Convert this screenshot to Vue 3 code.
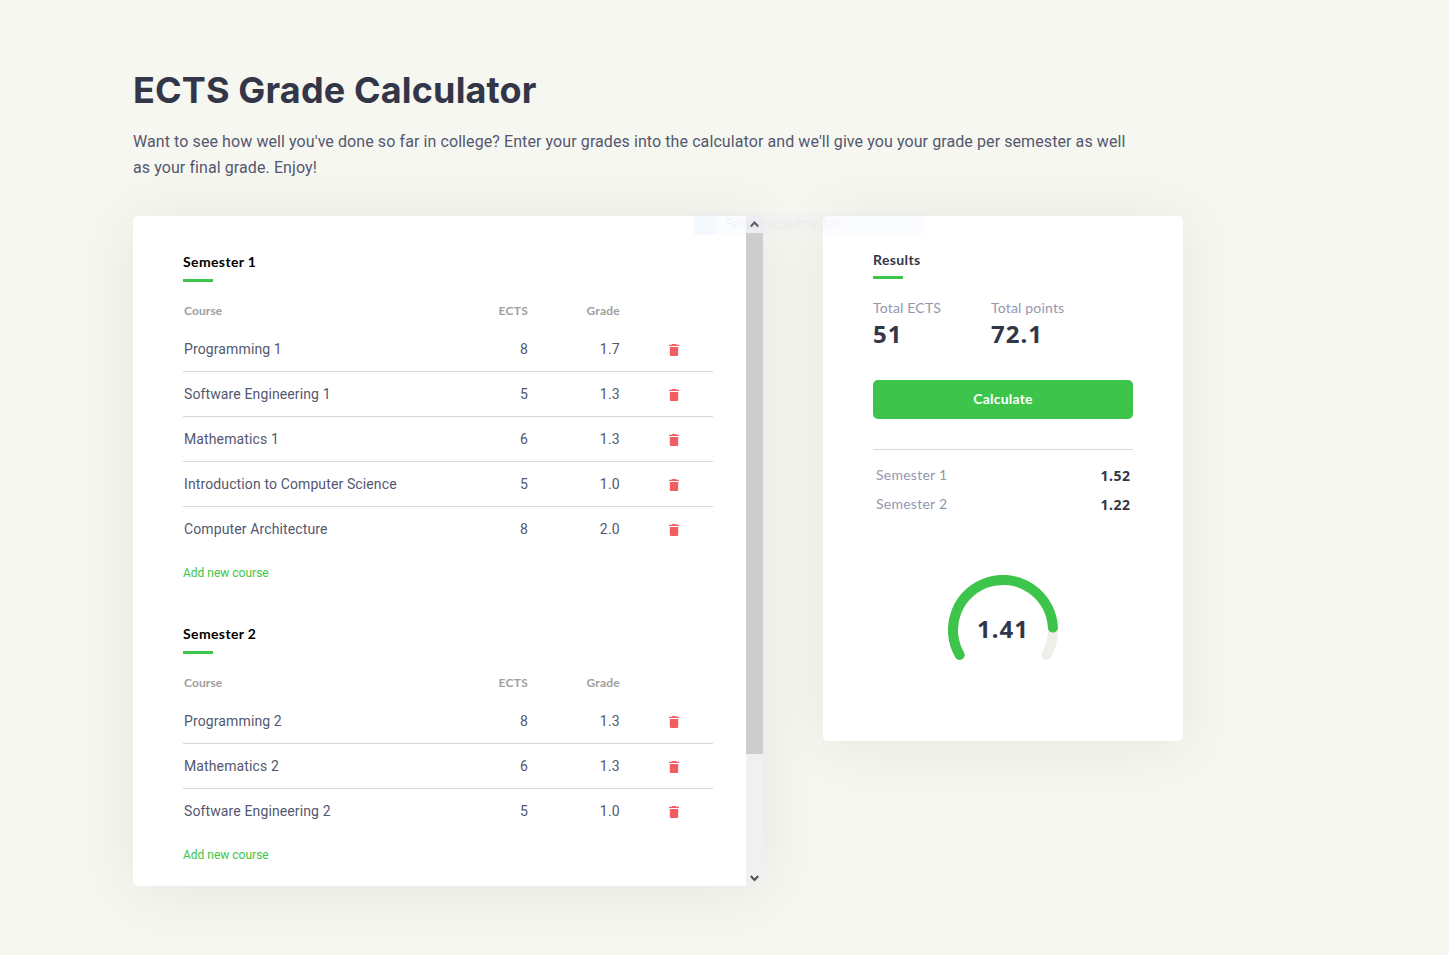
<script setup>
const semesters = [
  {
    name: 'Semester 1',
    courses: [
      ['Programming 1', 8, '1.7'],
      ['Software Engineering 1', 5, '1.3'],
      ['Mathematics 1', 6, '1.3'],
      ['Introduction to Computer Science', 5, '1.0'],
      ['Computer Architecture', 8, '2.0'],
    ],
  },
  {
    name: 'Semester 2',
    courses: [
      ['Programming 2', 8, '1.3'],
      ['Mathematics 2', 6, '1.3'],
      ['Software Engineering 2', 5, '1.0'],
    ],
  },
]
const results = [
  ['Semester 1', '1.52'],
  ['Semester 2', '1.22'],
]
</script>

<template>
  <main class="page">
    <h1>ECTS Grade Calculator</h1>
    <p class="intro">
      <span>Want to see how well you've done so far in college? Enter your grades into the calculator and we'll give you your grade per semester as well</span><br />
      <span>as your final grade. Enjoy!</span>
    </p>
    <div class="columns">
      <section class="card courses">
        <div class="list">
          <div v-for="s in semesters" :key="s.name" class="semester">
            <h2><span>{{ s.name }}</span></h2>
            <div class="row head">
              <span>Course</span><span class="num">ECTS</span><span class="num">Grade</span>
            </div>
            <div v-for="c in s.courses" :key="c[0]" class="row">
              <span>{{ c[0] }}</span>
              <span class="num">{{ c[1] }}</span>
              <span class="num">{{ c[2] }}</span>
              <svg class="trash" viewBox="0 0 10 12">
                <path d="M0 .8H2.6L3.2 0H6.8L7.4 .8H10V2H0Z M.8 3H9.2V10.8Q9.2 12 8 12H2Q.8 12 .8 10.8Z" />
              </svg>
            </div>
            <a class="add">Add new course</a>
          </div>
        </div>
        <div class="scrollbar">
          <svg viewBox="0 0 17 17"><path d="M4.8 10.5L8.5 6.5L12.2 10.5" /></svg>
          <div class="thumb"></div>
          <svg class="down" viewBox="0 0 17 17"><path d="M4.8 7L8.5 11L12.2 7" /></svg>
        </div>
      </section>

      <section class="card results">
        <h2><span>Results</span></h2>
        <div class="totals">
          <div><label>Total ECTS</label><strong>51</strong></div>
          <div><label>Total points</label><strong>72.1</strong></div>
        </div>
        <button>Calculate</button>
        <div class="grades">
          <div v-for="r in results" :key="r[0]" class="grade">
            <span>{{ r[0] }}</span><b>{{ r[1] }}</b>
          </div>
        </div>
        <div class="gauge">
          <svg viewBox="0 0 110 110">
            <path class="track" d="M11.7 80A50 50 0 1 1 98.3 80" />
            <path class="value" d="M11.7 80A50 50 0 1 1 104.9 52.6" />
          </svg>
          <strong>1.41</strong>
        </div>
      </section>
    </div>
    <div class="hint"><i></i><span>Fenster ausschneiden</span></div>
  </main>
</template>

<style>
body { background: #f7f7f1; }
</style>

<style scoped>
* { box-sizing: border-box; }
.page {
  position: relative;
  height: 955px;
  overflow: hidden;
  padding: 65px 0 0 133px;
  background: #f7f7f1;
  color: #53576f;
  font-family: Roboto, "Liberation Sans", sans-serif;
}
h1 {
  margin: 0;
  height: 50px;
  font: 700 36px/50px Inter, sans-serif;
  letter-spacing: 0.15px;
  color: #333647;
  white-space: nowrap;
}
.intro {
  margin: 14px 0 0;
  height: 52px;
  font-size: 16px;
  line-height: 26px;
  letter-spacing: 0.088px;
  white-space: nowrap;
}
.columns { display: flex; align-items: flex-start; gap: 60px; margin-top: 35px; }
.card { background: #fff; border-radius: 5px; box-shadow: 0 5px 60px rgba(20, 30, 20, 0.075); }
.courses { display: flex; width: 630px; height: 670px; overflow: hidden; }
.list { width: 613px; padding: 35px 33px 0 50px; }
.semester { height: 372px; }
h2 {
  margin: 0;
  height: 31px;
  font: 700 14px/22px Lato, sans-serif;
  letter-spacing: 0.38px;
  color: #000;
}
h2::after { content: ""; display: block; width: 30px; height: 3px; margin-top: 6px; background: #3cc54a; }
.row {
  display: grid;
  grid-template-columns: 252px 92px 92px 49px 10px;
  align-items: center;
  height: 45px;
  padding-left: 1px;
  border-bottom: 1px solid #d8d8d8;
  font-size: 14px;
  letter-spacing: 0.12px;
}
.row.head {
  align-items: start;
  padding-top: 14px;
  border: 0;
  font: 700 12px/30px Lato, sans-serif;
  color: #a0a0a0;
}
.row:nth-last-child(2) { border-color: transparent; }
.num { text-align: right; letter-spacing: 0.25px; }
.trash { grid-column: 5; width: 10px; height: 12px; fill: #f15e62; margin-top: 2px; }
.add { display: block; margin-top: 11px; font-size: 12px; line-height: 20px; color: #3cc54a; }
.scrollbar { display: flex; flex-direction: column; width: 17px; background: #f0f0f0; }
.scrollbar svg { display: block; width: 17px; height: 17px; flex: none; fill: none; stroke: #505050; stroke-width: 2; }
.thumb { height: 521px; background: #cdcdcd; }
.scrollbar .down { margin-top: auto; }
.results { width: 360px; height: 525px; padding: 33px 50px 0; }
.results h2 { color: #333647; height: 30px; }
.results h2::after { margin-top: 5px; }
.totals { display: flex; margin-top: 18px; height: 83px; }
.totals div { width: 118px; }
label { display: block; font: 14px/22px Lato, sans-serif; letter-spacing: 0.18px; color: #9297b0; white-space: nowrap; }
strong { display: block; font: 700 24px/32px "Noto Sans", sans-serif; letter-spacing: 1px; color: #333647; }
.totals strong { margin-top: -1px; }
button {
  display: block;
  width: 260px;
  height: 39px;
  padding: 0 0 2px;
  border: 0;
  border-radius: 5px;
  background: #3cc54a;
  color: #fff;
  font: 700 14px/37px Lato, sans-serif;
  letter-spacing: 0.22px;
}
.grades { margin-top: 30px; padding: 11px 3px 0; border-top: 1px solid #d8d8d8; }
.grade { display: flex; justify-content: space-between; height: 29px; line-height: 28px; }
.grade span { font: 14px/28px Lato, sans-serif; letter-spacing: 0.25px; color: #9297b0; }
.grade b { margin-right: -0.5px; font: 700 14px/30px "Noto Sans", sans-serif; letter-spacing: 0.5px; color: #333647; }
.gauge { display: grid; width: 110px; margin: 56px auto 0; place-items: center; }
.gauge > * { grid-area: 1 / 1; }
.gauge svg { width: 110px; height: 110px; fill: none; stroke-width: 10; stroke-linecap: round; }
.gauge strong { position: relative; top: -1px; }
.track { stroke: #efefe9; }
.value { stroke: #3cc54a; }
/* Fading capture menu item that floats over both cards. */
.hint {
  position: absolute;
  left: 694px;
  top: 213px;
  display: flex;
  width: 230px;
  height: 22px;
  background: rgba(215, 230, 255, 0.1);
  font: 12px/22px "Open Sans", sans-serif;
  letter-spacing: -0.4px;
  color: rgba(80, 80, 80, 0.07);
}
.hint i { display: grid; place-items: center; width: 22px; margin-right: 10px; background: rgba(200, 230, 250, 0.12); }
.hint i::after { content: ""; width: 6px; height: 6px; border-radius: 50%; background: rgba(250, 245, 240, 0.8); }
</style>
